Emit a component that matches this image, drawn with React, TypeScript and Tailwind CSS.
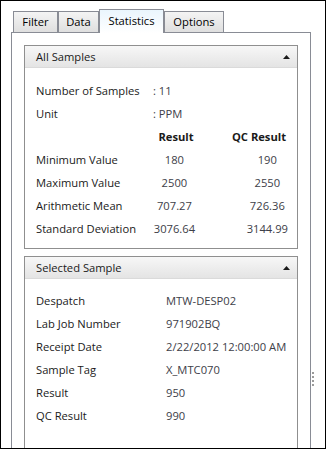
import React from "react";

// Statistics tab of a sample viewer: two collapsible group boxes
const font = "font-['Open_Sans','Noto_Sans',sans-serif]";

const tabs = [
  { label: "Filter", w: "w-[45px]" },
  { label: "Data", w: "w-[41px]" },
  { label: "Statistics", w: "w-[65px]", active: true },
  { label: "Options", w: "w-[60px]" },
];

const stats = [
  { label: "Minimum Value", result: "180", qc: "190" },
  { label: "Maximum Value", result: "2500", qc: "2550" },
  { label: "Arithmetic Mean", result: "707.27", qc: "726.36" },
  { label: "Standard Deviation", result: "3076.64", qc: "3144.99" },
];

const selected = [
  { label: "Despatch", value: "MTW-DESP02" },
  { label: "Lab Job Number", value: "971902BQ" },
  { label: "Receipt Date", value: "2/22/2012 12:00:00 AM" },
  { label: "Sample Tag", value: "X_MTC070" },
  { label: "Result", value: "950" },
  { label: "QC Result", value: "990" },
];

function Arrow() {
  return (
    <svg width="7" height="4" viewBox="0 0 7 4" className="block">
      <path d="M0 4 L3.5 0 L7 4 Z" fill="#1a1a1a" />
    </svg>
  );
}

function GroupHeader({ title }: { title: string }) {
  return (
    <div className="h-[22px] flex items-center justify-between pl-[11px] pr-[7px] bg-gradient-to-b from-[#f7f7f7] to-[#e4e4e4] border-b border-[#dadada]">
      <span className="text-[#1a1a1a]">{title}</span>
      <Arrow />
    </div>
  );
}

export default function App() {
  return (
    <div className={`w-[326px] h-[449px] border border-black bg-white overflow-hidden flex text-[11.2px] leading-none ${font}`}>
      <div className="ml-[10px] pt-[8px] flex flex-col">
        {/* tab strip */}
        <div className="flex items-end h-[24px] -mb-px pl-[2px]">
          {tabs.map((t) =>
            t.active ? (
              <div
                key={t.label}
                className={`${t.w} h-[24px] relative z-10 border border-b-0 border-[#898c95] bg-gradient-to-b from-[#eaf5fd] to-white flex items-center justify-center pb-[2px] text-black`}
              >
                {t.label}
              </div>
            ) : (
              <div
                key={t.label}
                className={`${t.w} h-[22px] border border-b-0 border-[#898c95] bg-gradient-to-b from-[#f4f4f4] to-[#dedede] flex items-center justify-center pb-[2px] text-black`}
              >
                {t.label}
              </div>
            )
          )}
        </div>

        {/* tab page */}
        <div className="w-[300px] h-[500px] border border-[#898c95] pt-[12px] px-[12px]">
          {/* All Samples */}
          <div className="h-[204px] border border-[#8f8f8f]">
            <GroupHeader title="All Samples" />
            <div className="pt-[11px] pl-[11px]">
              <div className="h-[23px] flex items-center">
                <span className="w-[117px] text-[#1a1a1a]">Number of Samples</span>
                <span className="text-[#3d4048]">: 11</span>
              </div>
              <div className="h-[23px] flex items-center">
                <span className="w-[117px] text-[#1a1a1a]">Unit</span>
                <span className="text-[#3d4048]">: PPM</span>
              </div>
              <div className="h-[23px] flex items-center font-bold text-[#1a1a1a]">
                <span className="w-[110px]" />
                <span className="w-[60px] text-center">Result</span>
                <span className="w-[23px]" />
                <span className="w-[60px] text-center">QC Result</span>
              </div>
              {stats.map((s) => (
                <div key={s.label} className="h-[23px] flex items-center">
                  <span className="w-[110px] text-[#1a1a1a]">{s.label}</span>
                  <span className="w-[60px] text-center text-[#3d4048]">{s.result}</span>
                  <span className="w-[34px]" />
                  <span className="w-[60px] text-center text-[#3d4048]">{s.qc}</span>
                </div>
              ))}
            </div>
          </div>

          {/* Selected Sample */}
          <div className="mt-[7px] h-[300px] border border-[#8f8f8f]">
            <GroupHeader title="Selected Sample" />
            <div className="pt-[10px] pl-[11px]">
              {selected.map((s) => (
                <div key={s.label} className="h-[23px] flex items-center">
                  <span className="w-[130px] text-[#1a1a1a]">{s.label}</span>
                  <span className="text-[#3d4048]">{s.value}</span>
                </div>
              ))}
            </div>
          </div>
        </div>
      </div>

      {/* splitter grip */}
      <div className="ml-[1px] pt-[371px] flex flex-col gap-[2px]">
        {[0, 1, 2, 3].map((i) => (
          <div key={i} className="w-[2px] h-[2px] bg-[#9a9a9a]" />
        ))}
      </div>
    </div>
  );
}
